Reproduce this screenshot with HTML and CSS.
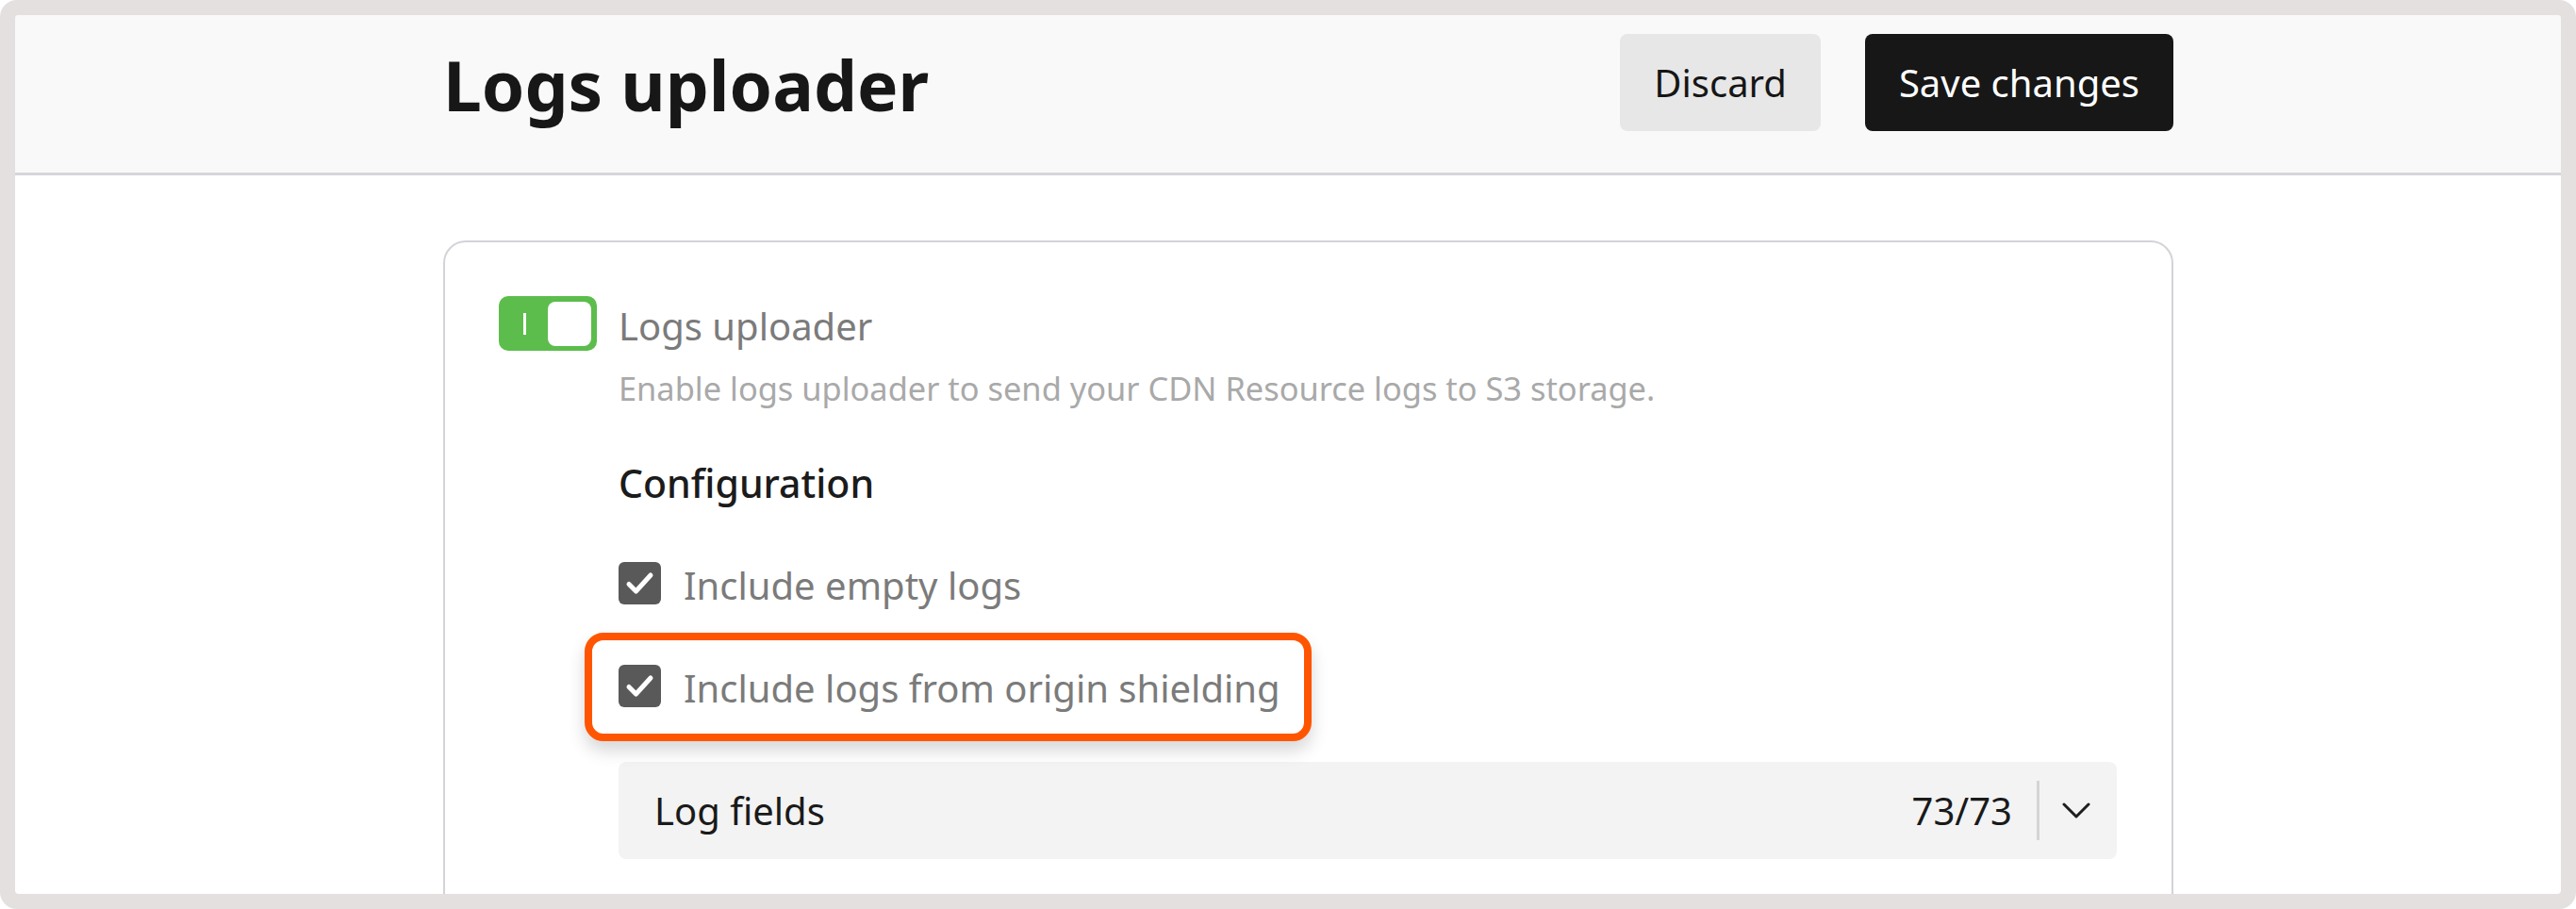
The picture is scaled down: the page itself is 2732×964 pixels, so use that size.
FILE: index.html
```html
<!DOCTYPE html>
<html lang="en">
<head>
<meta charset="utf-8">
<title>Logs uploader</title>
<link rel="stylesheet" href="styles.css">
</head>
<body>
<div class="frame">
  <div class="window">
    <header class="header">
      <div class="container header-row">
        <h1 class="title">Logs uploader</h1>
        <div class="actions">
          <button class="btn btn-secondary">Discard</button>
          <button class="btn btn-primary">Save changes</button>
        </div>
      </div>
    </header>
    <main class="container main">
      <section class="card">
        <div class="toggle" aria-checked="true" role="switch">
          <span class="toggle-mark"></span>
          <span class="toggle-knob"></span>
        </div>
        <div class="card-body">
          <div class="toggle-label">Logs uploader</div>
          <div class="desc">Enable logs uploader to send your CDN Resource logs to S3 storage.</div>
          <h2 class="section-title">Configuration</h2>
          <div class="check-row">
            <span class="checkbox">
              <svg viewBox="0 0 45 45" width="45" height="45"><path d="M11 23.5 L18.5 31 L34 14" fill="none" stroke="#fff" stroke-width="5" stroke-linecap="round" stroke-linejoin="round"/></svg>
            </span>
            <span class="check-label">Include empty logs</span>
          </div>
          <div class="check-row check-row-2">
            <span class="highlight"></span>
            <span class="checkbox">
              <svg viewBox="0 0 45 45" width="45" height="45"><path d="M11 23.5 L18.5 31 L34 14" fill="none" stroke="#fff" stroke-width="5" stroke-linecap="round" stroke-linejoin="round"/></svg>
            </span>
            <span class="check-label">Include logs from origin shielding</span>
          </div>
          <div class="select">
            <span class="select-label">Log fields</span>
            <span class="select-count">73/73</span>
            <span class="select-divider"></span>
            <svg class="chevron" viewBox="0 0 30 17" width="30" height="17"><polyline points="2,2 15,15 28,2" fill="none" stroke="#1e1e1e" stroke-width="3" stroke-linecap="round" stroke-linejoin="round"/></svg>
          </div>
        </div>
      </section>
    </main>
  </div>
</div>
</body>
</html>
```

FILE: styles.css
```css
* { box-sizing: border-box; }
html, body {
  margin: 0;
  padding: 0;
  background: #ffffff;
  font-family: "Noto Sans", "Open Sans", sans-serif;
}
.frame {
  width: 2732px;
  height: 964px;
  background: #e4e0df;
  border-radius: 18px;
  padding: 16px;
}
.window {
  height: 932px;
  background: #ffffff;
  border-radius: 4px;
  overflow: hidden;
}
.container {
  width: 1835px;
  margin-left: 454px;
}
.header {
  background: #f9f9f9;
  border-bottom: 3px solid #d6d6da;
  padding: 20px 0 44px;
}
.header-row {
  display: flex;
  align-items: center;
  justify-content: space-between;
  height: 103px;
}
.title {
  margin: 0;
  font-size: 73px;
  font-weight: 700;
  color: #171717;
  line-height: 103px;
  padding-top: 3px;
}
.actions {
  display: flex;
  gap: 47px;
}
.btn {
  height: 103px;
  padding: 0 36px;
  border: none;
  border-radius: 8px;
  font-family: "Noto Sans", "Open Sans", sans-serif;
  font-size: 40px;
  font-weight: 400;
  line-height: 103px;
}
.btn-secondary { background: #e7e7e7; color: #161616; }
.btn-primary { background: #171717; color: #ffffff; }

.main { padding-top: 69px; }
.card {
  border: 2px solid #d3d3d8;
  border-radius: 24px;
  padding: 57px 58px 80px 57px;
  display: flex;
  align-items: flex-start;
  gap: 23px;
  min-height: 900px;
}
.toggle {
  position: relative;
  flex: 0 0 104px;
  width: 104px;
  height: 58px;
  background: #5cbd4c;
  border-radius: 10px;
}
.toggle-mark {
  position: absolute;
  left: 26px;
  top: 18px;
  width: 3px;
  height: 23px;
  background: #ffffff;
}
.toggle-knob {
  position: absolute;
  left: 52px;
  top: 6px;
  width: 46px;
  height: 47px;
  background: #ffffff;
  border-radius: 8px;
}
.card-body {
  flex: 1;
  display: flex;
  flex-direction: column;
  align-items: flex-start;
}
.toggle-label {
  font-size: 40px;
  line-height: 64px;
  color: #7b7b7b;
}
.desc {
  margin-top: 10px;
  font-size: 34.4px;
  line-height: 48px;
  color: #a9a9a9;
}
.section-title {
  margin: 48px 0 0;
  font-size: 41px;
  font-weight: 500;
  line-height: 56px;
  color: #1b1b1b;
}
.check-row {
  position: relative;
  display: flex;
  align-items: flex-start;
  gap: 24px;
  margin-top: 51px;
}
.check-row-2 { margin-top: 49px; }
.checkbox {
  position: relative;
  z-index: 1;
  width: 45px;
  height: 45px;
  margin-top: 5px;
  background: #595959;
  border-radius: 6px;
  display: block;
}
.checkbox svg { display: block; }
.check-label {
  position: relative;
  z-index: 1;
  font-size: 40px;
  line-height: 60px;
  color: #7b7b7b;
}
.highlight {
  position: absolute;
  top: -29px;
  bottom: -26px;
  left: -36px;
  right: -33px;
  border: 8px solid #ff5500;
  border-radius: 20px;
  background: #ffffff;
  box-shadow: 0 10px 18px rgba(0, 0, 0, 0.16);
}
.select {
  align-self: stretch;
  margin-top: 48px;
  height: 103px;
  background: #f3f3f3;
  border-radius: 8px;
  display: flex;
  align-items: center;
  padding: 0 28px 0 38px;
}
.select-label {
  flex: 1;
  font-size: 40px;
  line-height: 56px;
  color: #1a1a1a;
}
.select-count {
  font-size: 40px;
  line-height: 56px;
  color: #1a1a1a;
}
.select-divider {
  width: 3px;
  height: 63px;
  background: #d4d4d4;
  margin: 0 24px 0 26px;
}
.chevron { display: block; }
```
